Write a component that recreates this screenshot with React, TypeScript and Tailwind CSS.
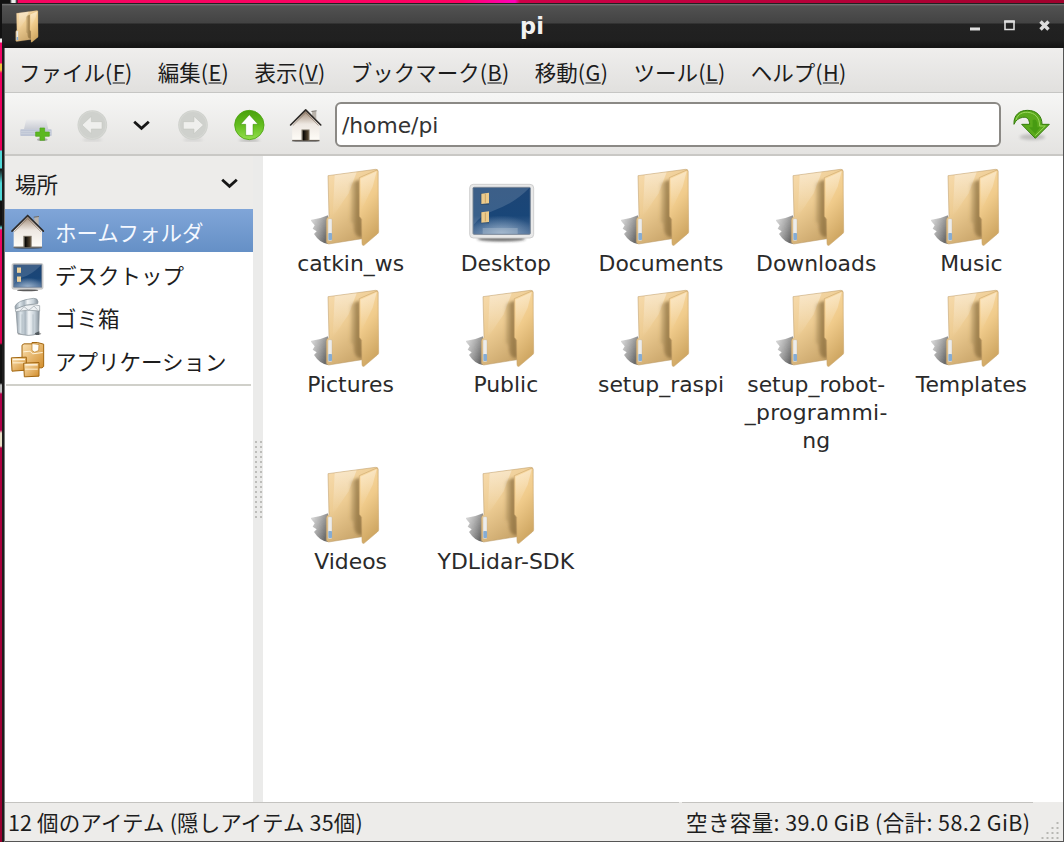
import React from 'react';

const CJK = "font-['Noto_Sans_CJK_JP','Noto_Sans',sans-serif]";
const SANS = "font-['DejaVu_Sans','Noto_Sans_CJK_JP',sans-serif]";

function SharedGradients() {
  return (
    <svg className="absolute h-0 w-0" aria-hidden="true">
      <defs>
        <linearGradient id="folderBack" x1="0" y1="0" x2="0.5" y2="1">
          <stop offset="0" stopColor="#f8dcae" />
          <stop offset="0.5" stopColor="#edcc93" />
          <stop offset="1" stopColor="#c9a56a" />
        </linearGradient>
        <linearGradient id="folderFront" x1="0" y1="0" x2="0.3" y2="1">
          <stop offset="0" stopColor="#fbdeab" />
          <stop offset="0.5" stopColor="#f0cb8b" />
          <stop offset="1" stopColor="#d0a864" />
        </linearGradient>
        <linearGradient id="folderInner" x1="0" y1="0" x2="1" y2="0">
          <stop offset="0" stopColor="#8d7040" stopOpacity="0.1" />
          <stop offset="0.5" stopColor="#8d7040" stopOpacity="0.7" />
          <stop offset="1" stopColor="#8a6c3c" stopOpacity="0.85" />
        </linearGradient>
        <linearGradient id="folderShadow" x1="0" y1="0" x2="1" y2="0.6">
          <stop offset="0" stopColor="#888" stopOpacity="0.25" />
          <stop offset="1" stopColor="#444" stopOpacity="0.8" />
        </linearGradient>
        <linearGradient id="shine" x1="0" y1="0" x2="0" y2="1">
          <stop offset="0" stopColor="#fff" stopOpacity="0.38" />
          <stop offset="1" stopColor="#fff" stopOpacity="0" />
        </linearGradient>
        <linearGradient id="screen" x1="0" y1="0" x2="0" y2="1">
          <stop offset="0" stopColor="#1d4575" />
          <stop offset="0.6" stopColor="#194678" />
          <stop offset="1" stopColor="#4f7099" />
        </linearGradient>
        <radialGradient id="screenGlow" cx="0.5" cy="1" r="0.6">
          <stop offset="0" stopColor="#b5c9dd" stopOpacity="0.75" />
          <stop offset="1" stopColor="#9fb8d0" stopOpacity="0" />
        </radialGradient>
        <linearGradient id="wall" x1="0" y1="0" x2="0" y2="1">
          <stop offset="0" stopColor="#9a8470" />
          <stop offset="0.45" stopColor="#eee8e2" />
          <stop offset="1" stopColor="#fffdf8" />
        </linearGradient>
        <linearGradient id="door" x1="0" y1="0" x2="1" y2="0">
          <stop offset="0" stopColor="#000" />
          <stop offset="1" stopColor="#5a4a34" />
        </linearGradient>
        <linearGradient id="greenDisc" x1="0" y1="0" x2="0" y2="1">
          <stop offset="0" stopColor="#48a00c" />
          <stop offset="0.5" stopColor="#63bd1e" />
          <stop offset="1" stopColor="#93de4c" />
        </linearGradient>
        <linearGradient id="steel" x1="0" y1="0" x2="1" y2="0">
          <stop offset="0" stopColor="#8e9aa4" />
          <stop offset="0.2" stopColor="#dfe7ec" />
          <stop offset="0.4" stopColor="#aab6bf" />
          <stop offset="0.55" stopColor="#f3f6f8" />
          <stop offset="0.8" stopColor="#c6d0d7" />
          <stop offset="1" stopColor="#87929b" />
        </linearGradient>
        <linearGradient id="amber" x1="0" y1="0" x2="1" y2="1">
          <stop offset="0" stopColor="#fbe2b4" />
          <stop offset="1" stopColor="#d28d2b" />
        </linearGradient>
        <linearGradient id="drive" x1="0" y1="0" x2="0" y2="1">
          <stop offset="0" stopColor="#ececed" />
          <stop offset="1" stopColor="#c9ccd4" />
        </linearGradient>
        <linearGradient id="chrome" x1="0" y1="0" x2="0" y2="1">
          <stop offset="0" stopColor="#e6e6e6" />
          <stop offset="1" stopColor="#d5d5d5" />
        </linearGradient>
        <filter id="soft2" x="-20%" y="-20%" width="140%" height="140%">
          <feGaussianBlur stdDeviation="2.2" />
        </filter>
        <filter id="soft4" x="-40%" y="-60%" width="180%" height="220%">
          <feGaussianBlur stdDeviation="4" />
        </filter>
      </defs>
    </svg>
  );
}

function FolderShape() {
  return (
    <>
      <path d="M84 47 L226 28 Q234 27 234 33 L230 222 L186 236 L86 252 Q79 250 79 245 L79 180 Q80 172 87 170 Z" fill="url(#folderBack)" stroke="#bd9c6c" strokeWidth="1.6" />
      <path d="M104 46 L170 37 L146 100 L98 170 Z" fill="url(#shine)" />
      <path d="M150 74 Q160 62 180 59 L188 232 Q160 234 160 192 L150 184 Z" fill="url(#folderInner)" filter="url(#soft4)" />
      <path d="M178 53 L228 31 Q234 29 234 35 L236 215 Q236 219 232 222 L192 256 Q186 258 186 250 L185 178 L178 169 Z" fill="url(#folderFront)" stroke="#c6a066" strokeWidth="1.6" />
      <path d="M182 56 L230 34 L218 80 L184 150 Z" fill="url(#shine)" />
      <rect x="84" y="176" width="12" height="66" rx="3" fill="#ededeb" stroke="#bcae94" strokeWidth="1" />
      <rect x="85" y="219" width="11" height="21" rx="2" fill="#86acd2" />
    </>
  );
}

function FolderIcon() {
  return (
    <svg className="h-20 w-20" viewBox="33 24 240 240">
      <path d="M31 180 Q58 178 84 166 L84 252 Q60 250 42 222 L50 214 L38 206 L44 196 Z" fill="url(#folderShadow)" filter="url(#soft2)" />
      <FolderShape />
    </svg>
  );
}

function DesktopIcon() {
  return (
    <svg className="h-20 w-20" viewBox="48 24 240 240">
      <ellipse cx="154" cy="236" rx="72" ry="7" fill="#222" opacity="0.75" filter="url(#soft4)" />
      <path d="M80 226 H230 L210 238 Q154 244 100 238 Z" fill="#8b8b8b" filter="url(#soft4)" />
      <rect x="59" y="73" width="192" height="161" rx="11" fill="#e9e9e9" stroke="#c8c8c8" strokeWidth="2.5" />
      <rect x="69" y="82" width="172" height="141" rx="3" fill="url(#screen)" stroke="#7f8b99" strokeWidth="3" />
      <path d="M71 84 H238 Q190 132 130 152 Q92 166 71 194 Z" fill="#fff" opacity="0.14" />
      <rect x="71" y="130" width="168" height="91" fill="url(#screenGlow)" />
      <rect x="98" y="204" width="105" height="18" fill="#b4c3d2" opacity="0.4" />
      {[98, 154].map((y) => (
        <g key={y}>
          <rect x="92" y={y + 2} width="25" height="34" fill="#16293f" opacity="0.4" filter="url(#soft2)" />
          <path d={`M94 ${y + 3} L117 ${y} V${y + 32} L94 ${y + 34} Z`} fill="#eccb8c" />
          <path d={`M106 ${y + 4} V${y + 30}`} stroke="#c9a464" strokeWidth="3" />
        </g>
      ))}
    </svg>
  );
}

function HomeIcon({ viewBox }: { viewBox: string }) {
  return (
    <svg className="size-9" viewBox={viewBox}>
      <ellipse cx="83" cy="292" rx="44" ry="4" fill="#333" opacity="0.5" filter="url(#soft2)" />
      <path d="M103 201 L116 199 V224 L103 214 Z" fill="#b9b3ab" />
      <path d="M101 200 L117 198" stroke="#6e6963" strokeWidth="3" />
      <path d="M41 239 L83 197 L126 239 V291 H41 Z" fill="url(#wall)" />
      <path d="M41 290 H126" stroke="#4e473e" strokeWidth="3" />
      <rect x="70" y="256" width="25" height="34" fill="#7d7568" />
      <rect x="74" y="259" width="18" height="31" fill="url(#door)" />
      <path d="M36 242 L83 195 L130 242" fill="none" stroke="#2d2a28" strokeWidth="5" strokeLinejoin="round" strokeLinecap="round" />
      <path d="M43 244 L83 204 L123 244" fill="none" stroke="#6d5848" strokeWidth="1.5" />
    </svg>
  );
}

function SmallDesktopIcon() {
  return (
    <svg className="size-9" viewBox="30 316.5 108 108">
      <ellipse cx="83" cy="419" rx="32" ry="3.5" fill="#333" opacity="0.8" filter="url(#soft2)" />
      <rect x="36" y="339" width="93" height="77" rx="5" fill="#d2d3d4" stroke="#b9b9b9" strokeWidth="2" />
      <rect x="41" y="343" width="84" height="67" fill="url(#screen)" stroke="#65758a" strokeWidth="2" />
      <path d="M42 344 H123 Q96 372 66 381 Q50 387 42 399 Z" fill="#fff" opacity="0.14" />
      <rect x="42" y="362" width="82" height="47" fill="url(#screenGlow)" />
      <rect x="51" y="351" width="12" height="16" fill="#ecd19c" />
      <rect x="51" y="378" width="12" height="16" fill="#ecd19c" />
    </svg>
  );
}

function TrashIcon() {
  return (
    <svg className="h-[39px] w-9" viewBox="30 442 108 117">
      <ellipse cx="88" cy="552" rx="36" ry="5" fill="#444" opacity="0.5" filter="url(#soft2)" />
      <path d="M48 480 L53 550 Q84 564 116 551 L118 480 Z" fill="url(#steel)" stroke="#848e96" strokeWidth="2" />
      <path d="M66 494 V552 M99 494 V554" stroke="#8c9aa5" strokeWidth="2" opacity="0.6" />
      <path d="M46 480 Q78 458 119 468 L119 484 Q84 478 47 486 Z" fill="#eef1f3" stroke="#8f999f" strokeWidth="2" />
      <path d="M60 484 L72 471 L86 482 L102 469 L112 480" fill="none" stroke="#a9b2b8" strokeWidth="2.5" />
      <path d="M45 471 Q50 452 100 446 Q113 445 114 456 L113 462 Q78 462 46 478 Z" fill="url(#steel)" stroke="#87929a" strokeWidth="2" />
      <path d="M104 551 L118 545 V556 H108 Z" fill="#525a5f" />
    </svg>
  );
}

function ApplicationsIcon() {
  return (
    <svg className="size-9" viewBox="30 574.5 108 108">
      <path d="M66 584 L72 580 H96 V576 H112 L131 581 V648 L126 652 H66 Z" fill="url(#amber)" stroke="#a2660f" strokeWidth="3" />
      <path d="M96 579 V600 L104 605 L116 600 L117 582 Z" fill="#fffdf6" stroke="#b57821" strokeWidth="2" />
      <path d="M70 604 L90 602 L98 610 L128 606" fill="none" stroke="#fff3d8" strokeWidth="3" />
      <path d="M34 622 L79 620 V659 L36 662 Z" fill="url(#amber)" stroke="#a2660f" strokeWidth="3" />
      <path d="M38 637 H76" stroke="#fff2d4" strokeWidth="3" />
      <path d="M39 627 H75" stroke="#fff6e4" strokeWidth="4" />
      <path d="M71 638 L117 636 V677 L73 679 Z" fill="url(#amber)" stroke="#a2660f" strokeWidth="3" />
      <path d="M76 643 H113" stroke="#fff6e4" strokeWidth="4" />
      <path d="M75 656 H113" stroke="#fff2d4" strokeWidth="3" />
    </svg>
  );
}

function NewTabIcon() {
  return (
    <svg className="size-9" viewBox="54 318 108 108">
      <path d="M78 361 Q78 358 82 358 H135 Q139 358 139 361 L145 388 H72 Z" fill="url(#drive)" />
      <rect x="61" y="388" width="94" height="20" rx="2" fill="#bec5d5" />
      <path d="M62 395 H154 M62 401 H154" stroke="#cfd4df" strokeWidth="2.5" />
      <ellipse cx="127" cy="419" rx="16" ry="4" fill="#777" opacity="0.5" filter="url(#soft2)" />
      <path d="M120 384 H134 V396 H148 V409 H134 V421 H120 V409 H107 V396 H120 Z" fill="#5cb821" stroke="#4da51a" strokeWidth="2" strokeLinejoin="round" />
    </svg>
  );
}

function DisabledArrow({ forward = false }: { forward?: boolean }) {
  return (
    <svg className="size-9" viewBox="222 318 108 108">
      <g transform={forward ? 'matrix(-1 0 0 1 553 0)' : undefined}>
        <ellipse cx="277" cy="420" rx="30" ry="4" fill="#999" opacity="0.3" filter="url(#soft4)" />
        <circle cx="277" cy="375" r="44.5" fill="#cfd1cd" />
        <circle cx="277" cy="375" r="41" fill="none" stroke="#d9dbd7" strokeWidth="2" />
        <path d="M246 375 L274 349 V365 H306 V387 H274 V401 Z" fill="#efefed" stroke="#bdc0ba" strokeWidth="1.5" strokeLinejoin="round" />
      </g>
    </svg>
  );
}

function UpIcon() {
  return (
    <svg className="size-9" viewBox="693 318 108 108">
      <ellipse cx="748" cy="421" rx="32" ry="4" fill="#555" opacity="0.4" filter="url(#soft4)" />
      <circle cx="748" cy="375" r="44" fill="url(#greenDisc)" stroke="#4ba30e" strokeWidth="2.5" />
      <path d="M748 344 L774 373 H759 V406 H737 V373 H722 Z" fill="#fff" stroke="#3d8d0a" strokeWidth="1.5" strokeLinejoin="round" />
    </svg>
  );
}

function GoIcon() {
  return (
    <svg className="size-[38px]" viewBox="924 315 114 114">
      <ellipse cx="985" cy="411" rx="38" ry="9" fill="#666" opacity="0.32" filter="url(#soft4)" />
      <path d="M930 373 C928 346 946 331 970 331 C998 331 1014 348 1014 373 H1036 L994 415 L953 373 H977 C976 356 968 350 956 352 C944 354 935 361 930 373 Z" fill="#5aaa1c" stroke="#347c0c" strokeWidth="3" strokeLinejoin="round" />
      <path d="M936 360 C942 341 956 336 971 337 C992 338 1007 352 1007 378 H1024 L994 407" fill="none" stroke="#9bd65e" strokeWidth="3" />
      <path d="M986 360 V382 H975 L994 401 L1008 382 H1000 C1001 366 996 354 986 360 Z" fill="#3f940e" opacity="0.7" />
    </svg>
  );
}

function Chevron() {
  return (
    <svg className="h-[11px] w-[17px]" viewBox="0 0 17 11">
      <path d="M1.2 1.8 L8.5 8.4 L15.8 1.8" fill="none" stroke="#161616" strokeWidth="2.8" />
    </svg>
  );
}

const menus: [string, string][] = [
  ['ファイル', 'F'],
  ['編集', 'E'],
  ['表示', 'V'],
  ['ブックマーク', 'B'],
  ['移動', 'G'],
  ['ツール', 'L'],
  ['ヘルプ', 'H'],
];

const entries: string[][] = [
  ['catkin_ws'],
  ['Desktop'],
  ['Documents'],
  ['Downloads'],
  ['Music'],
  ['Pictures'],
  ['Public'],
  ['setup_raspi'],
  ['setup_robot-', '_programmi-', 'ng'],
  ['Templates'],
  ['Videos'],
  ['YDLidar-SDK'],
];

const places = [
  { name: 'ホームフォルダ', icon: <HomeIcon viewBox="30 187.5 108 108" /> },
  { name: 'デスクトップ', icon: <SmallDesktopIcon /> },
  { name: 'ゴミ箱', icon: <TrashIcon /> },
  { name: 'アプリケーション', icon: <ApplicationsIcon /> },
];

function TitleBar() {
  return (
    <header className="flex h-[45px] shrink-0 items-center border-t border-[#222] bg-[linear-gradient(#777_0px,#515151_2px,#434343_19px,#222_20px,#202020_36px,#151515_43px)] pl-[13px] pr-[11px]">
      <svg className="h-[33px] w-[24px]" viewBox="74 24 168 238" preserveAspectRatio="none">
        <FolderShape />
      </svg>
      <h1 className={`${SANS} flex-1 pl-[56px] pb-px text-center text-[22.5px] leading-7 font-bold text-[#f1f1f1]`}>pi</h1>
      <svg className="h-3 w-[84px]" viewBox="0 0 84 12">
        <rect x="1" y="7.5" width="10" height="3" fill="url(#chrome)" />
        <path d="M36 1 H45 V9.5 H36 Z" fill="none" stroke="#dedede" strokeWidth="1.6" />
        <path d="M35.2 1.8 H45.8" stroke="#dedede" strokeWidth="2" />
        <path d="M71.5 1.5 L79.5 9.5 M79.5 1.5 L71.5 9.5" stroke="#dedede" strokeWidth="3.4" />
      </svg>
    </header>
  );
}

function MenuBar() {
  return (
    <nav className={`${CJK} flex h-[45px] shrink-0 items-center gap-[25.2px] border-b border-[#c6c6c4] bg-gradient-to-b from-[#efeeed] to-[#e1e0de] pt-[3px] pl-[14px] text-[21.5px] leading-8 whitespace-nowrap text-[#1c1c1c]`}>
      {menus.map(([label, key]) => (
        <span key={key}>
          {label}
          <span className="tracking-[0.4px]">
            (<span className="underline decoration-[#777] decoration-2 underline-offset-1">{key}</span>)
          </span>
        </span>
      ))}
    </nav>
  );
}

function ToolBar() {
  return (
    <div className="flex h-[63px] shrink-0 items-center border-b-2 border-[#c9c8c5] bg-gradient-to-b from-[#f6f6f5] to-[#e4e3e1] pl-[13px] pr-[13px]">
      <NewTabIcon />
      <div className="ml-5"><DisabledArrow /></div>
      <div className="ml-[23px] pt-[4px]"><Chevron /></div>
      <div className="ml-[25px]"><DisabledArrow forward /></div>
      <div className="ml-5"><UpIcon /></div>
      <div className="ml-[21px]"><HomeIcon viewBox="28 183 112 112" /></div>
      <div className={`${SANS} mt-px ml-[11px] flex h-[45px] w-[667px] items-center rounded-[6px] border-2 border-[#8b8985] bg-white pt-[3px] pl-[5px] text-[21.8px] leading-7 text-[#333]`}>
        /home/pi
      </div>
      <div className="ml-[11px]"><GoIcon /></div>
    </div>
  );
}

function Sidebar() {
  return (
    <aside className={`${CJK} flex w-[248px] shrink-0 flex-col bg-white text-[21.5px] text-[#1d1d1d]`}>
      <div className="flex h-[53px] shrink-0 items-center justify-between bg-[#edecea] pl-[10px] pr-[15px]">
        <span className="pt-[2px] leading-8">場所</span>
        <div className="pt-[2px]"><Chevron /></div>
      </div>
      {places.map((place, i) => (
        <div
          key={place.name}
          className={
            i === 0
              ? 'flex h-[43px] shrink-0 items-center bg-gradient-to-b from-[#80a5d8] to-[#6590c6] pl-[5px] text-[#f4f8ff]'
              : 'flex h-[43px] shrink-0 items-center pl-[5px]'
          }
        >
          {place.icon}
          <span className="pt-[2px] pl-[9px] leading-8 whitespace-nowrap">{place.name}</span>
        </div>
      ))}
      <div className="mt-[3px] mr-[2px] ml-px h-[2px] shrink-0 bg-[#d0d0ca]" />
    </aside>
  );
}

function PaneHandle() {
  return (
    <div className="flex w-[10px] shrink-0 flex-col items-center bg-[#ebebea] pt-[285px]">
      <div className="grid grid-cols-2 gap-x-[3px] gap-y-[3px]">
        {Array.from({ length: 32 }, (_, i) => (
          <span key={i} className="size-[2px] bg-[#bdbdba]" />
        ))}
      </div>
    </div>
  );
}

function IconView() {
  return (
    <main className="flex-1 bg-white pt-3 pl-[10px]">
      <div className="grid w-[776px] grid-cols-5 items-start">
        {entries.map((lines) => (
          <div key={lines[0]} className={`${SANS} flex flex-col items-center pb-[11px] text-[21.9px] leading-7 text-[#2a2a2a]`}>
            {lines[0] === 'Desktop' ? <DesktopIcon /> : <FolderIcon />}
            <div className="pt-[2px] text-center whitespace-nowrap">
              {lines.map((line) => (
                <div key={line} className={line.startsWith('_') ? 'tracking-[0.3px]' : ''}>{line}</div>
              ))}
            </div>
          </div>
        ))}
      </div>
    </main>
  );
}

function StatusBar() {
  return (
    <footer className={`${CJK} flex h-10 shrink-0 border-b border-[#555] bg-[#edecea] text-[21.5px] leading-8 whitespace-nowrap text-[#1d1d1d]`}>
      <div className="w-[674px] border-t border-[#c4c3c0] pt-[3px] pl-[3px] tracking-[0.13px]">12 個のアイテム (隠しアイテム 35個)</div>
      <div className="ml-[3px] w-[351px] border-t border-[#c4c3c0] pt-[3px] pl-[4px] tracking-[0.4px]">空き容量: 39.0 GiB (合計: 58.2 GiB)</div>
      <svg className="mt-auto mb-[2px] ml-[8px] h-[18px] w-[18px]" viewBox="0 0 18 18">
        {[0, 1, 2, 3].flatMap((row) =>
          Array.from({ length: row + 1 }, (_, i) => (
            <rect key={`${row}-${i}`} x={15.5 - i * 5} y={1 + row * 5} width="2" height="2" fill="#b8b7b3" />
          )),
        )}
      </svg>
    </footer>
  );
}

export default function App() {
  return (
    <div className="flex h-[842px] w-[1064px] flex-col overflow-hidden bg-[#a80038]">
      <SharedGradients />
      <div className="h-[3px] shrink-0 bg-[linear-gradient(90deg,#111_0px,#111_10px,#eee_12px,#eee_15px,#111_17px,#f50560_18px,#ff0062_460px,#ff00b8_515px,#d00048_520px,#a0002c_1064px)]" />
      <div className="flex min-h-0 flex-1">
        <div className="w-[2px] shrink-0 bg-[linear-gradient(#111_0px,#111_35px,#eee_36px,#eee_39px,#f00565_40px,#f00565_60px,#f0c040_61px,#f0c040_67px,#f00060_70px,#e80058_147px,#50d8d8_148px,#50d8d8_165px,#111_166px,#50d8d8_180px,#50d8d8_197px,#111_198px,#111_222px,#60e0e0_225px,#f00565_227px,#d8004e_340px,#111_342px,#111_380px,#bbb_382px,#bbb_389px,#b00048_391px,#b00048_427px,#e8e0c8_430px,#e8e0c8_443px,#b00040_445px,#98002f_838px)]" />
        <div className="flex min-w-0 flex-1 flex-col bg-[#1d1d1d]">
          <TitleBar />
          <div className="ml-[2px] flex min-h-0 flex-1 flex-col border-x border-[#777] border-r-[#555]">
            <MenuBar />
            <ToolBar />
            <div className="flex min-h-0 flex-1">
              <Sidebar />
              <PaneHandle />
              <IconView />
            </div>
            <StatusBar />
          </div>
        </div>
      </div>
    </div>
  );
}
